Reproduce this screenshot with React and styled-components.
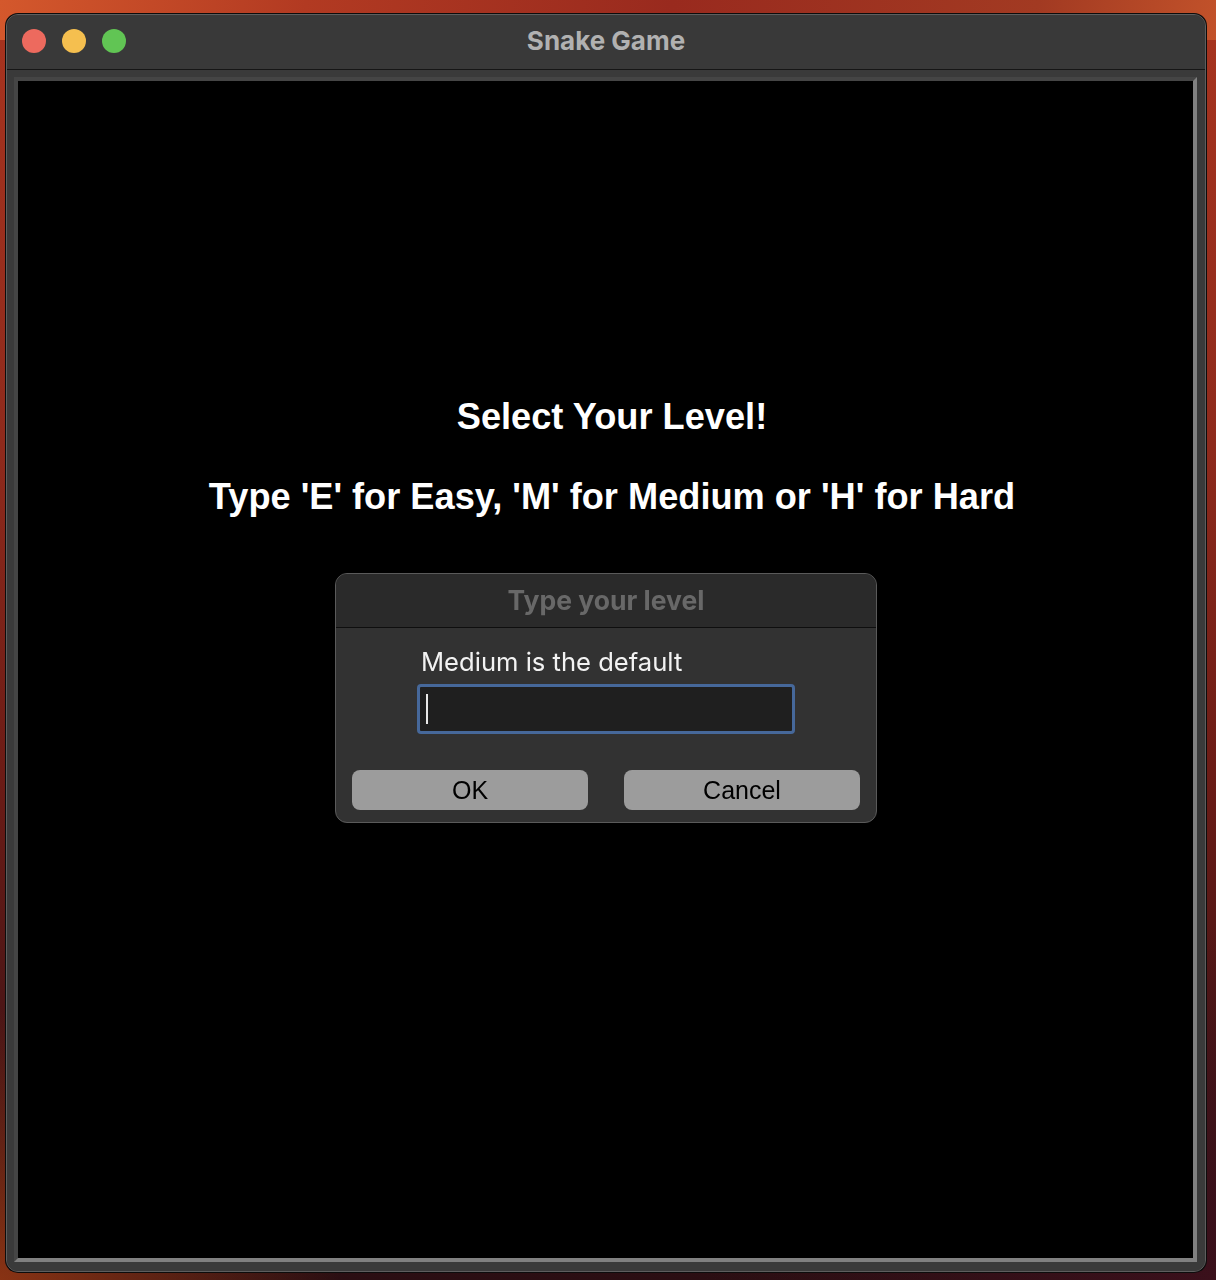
import React from "react";
import styled, { createGlobalStyle } from "styled-components";

const GlobalStyle = createGlobalStyle`
  html, body {
    margin: 0;
    padding: 0;
  }
  body {
    width: 1216px;
    height: 1280px;
    overflow: hidden;
    background:
      radial-gradient(ellipse 60% 40% at 100% 100%, rgba(60, 16, 28, 0.9), transparent 70%),
      radial-gradient(ellipse 40% 30% at 0% 100%, rgba(160, 60, 20, 0.8), transparent 70%),
      linear-gradient(180deg, #a8341f 0%, #8e2a1c 35%, #6c1c16 60%, #3a1216 90%, #2a0e12 100%);
  }
  #root {
    padding: 14px 10px 8px 6px;
  }
`;

const Wallpaper = styled.div`
  position: fixed;
  inset: 0;
  z-index: -1;
  background: linear-gradient(100deg, #d4582c 0%, #b23a22 25%, #992a1e 55%, #a23a22 85%, #c2522a 100%);
  height: 40px;
`;

const Window = styled.div`
  width: 1200px;
  height: 1258px;
  box-sizing: border-box;
  display: flex;
  flex-direction: column;
  background: #383838;
  border-radius: 12px;
  border: 1px solid #5e5e5e;
  box-shadow: 0 0 0 1px #0c0c0c;
  overflow: hidden;
`;

const TitleBar = styled.div`
  position: relative;
  height: 55px;
  box-sizing: border-box;
  padding-bottom: 3px;
  flex-shrink: 0;
  display: flex;
  align-items: center;
  justify-content: center;
  background: #393939;
  border-bottom: 1px solid #161616;
`;

const Lights = styled.div`
  position: absolute;
  left: 15px;
  top: 14px;
  display: flex;
  gap: 16px;
`;

const Light = styled.span`
  width: 24px;
  height: 24px;
  border-radius: 50%;
  background: ${(p) => p.color};
`;

const Title = styled.div`
  font-family: Inter, "Liberation Sans", sans-serif;
  font-weight: 700;
  font-size: 26px;
  color: #b1b1b1;
`;

const WindowBody = styled.div`
  flex: 1;
  padding: 7px 8px 9px 7px;
  display: flex;
  background: #3a3a3a;
`;

const Canvas = styled.div`
  flex: 1;
  background: #000;
  border-style: solid;
  border-width: 4px;
  border-color: #454545 #808080 #808080 #454545;
  display: flex;
  flex-direction: column;
  align-items: center;
  padding-top: 316px;
`;

const Heading = styled.div`
  font-family: "Liberation Sans", Arial, sans-serif;
  font-weight: 700;
  font-size: 36.2px;
  line-height: 40px;
  color: #fff;
  margin-left: 13px;
  margin-bottom: ${(p) => p.gap || 0}px;
`;

const Dialog = styled.div`
  width: 542px;
  height: 250px;
  box-sizing: border-box;
  margin-top: 56px;
  margin-left: 1px;
  display: flex;
  flex-direction: column;
  background: #323232;
  border: 1px solid #5a5a5a;
  border-radius: 12px;
  overflow: hidden;
`;

const DialogTitle = styled.div`
  height: 54px;
  box-sizing: border-box;
  padding-bottom: 2px;
  flex-shrink: 0;
  display: flex;
  align-items: center;
  justify-content: center;
  background: #2a2a2a;
  border-bottom: 1px solid #0e0e0e;
  font-family: Inter, "Liberation Sans", sans-serif;
  font-weight: 700;
  font-size: 26.5px;
  color: #686868;
`;

const DialogBody = styled.div`
  flex: 1;
  display: flex;
  flex-direction: column;
  padding: 18px 16px 12px 16px;
`;

const Label = styled.div`
  font-family: Inter, "Liberation Sans", sans-serif;
  font-size: 25.6px;
  line-height: 32px;
  color: #f2f2f2;
  margin-left: 69px;
  margin-bottom: 6px;
`;

const Field = styled.div`
  width: 378px;
  height: 50px;
  box-sizing: border-box;
  margin-left: 65px;
  display: flex;
  align-items: center;
  padding-left: 6px;
  background: #1f1f1f;
  border: 3px solid #46689a;
  border-radius: 4px;
`;

const Caret = styled.span`
  width: 2px;
  height: 30px;
  background: #e8e8e8;
`;

const Buttons = styled.div`
  margin-top: auto;
  display: flex;
  gap: 36px;
`;

const Button = styled.button`
  flex: 1;
  height: 40px;
  border: none;
  border-radius: 8px;
  background: #9c9c9c;
  color: #000;
  font-family: "Liberation Sans", Arial, sans-serif;
  font-size: 25px;
  padding: 0;
`;

export default function App() {
  return (
    <>
      <GlobalStyle />
      <Wallpaper />
      <Window>
        <TitleBar>
          <Lights>
            <Light color="#ed6a5e" />
            <Light color="#f5bf4f" />
            <Light color="#61c554" />
          </Lights>
          <Title>Snake Game</Title>
        </TitleBar>
        <WindowBody>
          <Canvas>
            <Heading gap={40}>Select Your Level!</Heading>
            <Heading>Type 'E' for Easy, 'M' for Medium or 'H' for Hard</Heading>
            <Dialog>
              <DialogTitle>Type your level</DialogTitle>
              <DialogBody>
                <Label>Medium is the default</Label>
                <Field>
                  <Caret />
                </Field>
                <Buttons>
                  <Button>OK</Button>
                  <Button>Cancel</Button>
                </Buttons>
              </DialogBody>
            </Dialog>
          </Canvas>
        </WindowBody>
      </Window>
    </>
  );
}
